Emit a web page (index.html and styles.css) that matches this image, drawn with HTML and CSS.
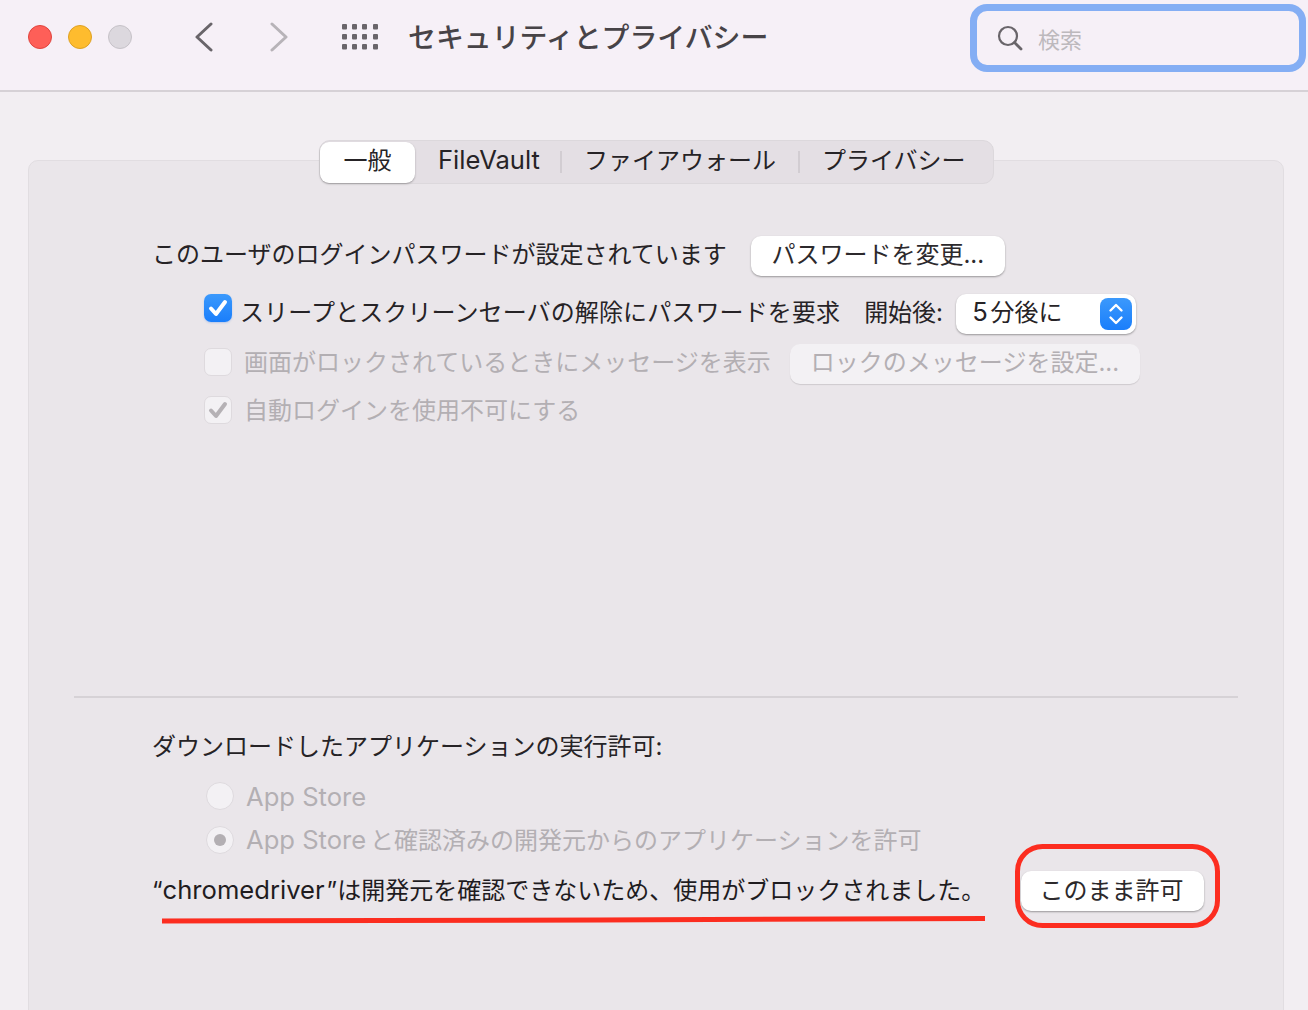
FILE: index.html
```html
<!DOCTYPE html>
<html lang="ja">
<head>
<meta charset="utf-8">
<title>セキュリティとプライバシー</title>
<link rel="stylesheet" href="styles.css">
</head>
<body>
<div class="window">
  <header class="toolbar">
    <div class="lights">
      <span class="light light-red"></span>
      <span class="light light-yellow"></span>
      <span class="light light-gray"></span>
    </div>
    <div class="nav">
      <svg class="chev" width="20" height="30" viewBox="0 0 20 30"><path d="M17 2 L3 15 L17 28" fill="none" stroke="#69656a" stroke-width="3" stroke-linecap="round" stroke-linejoin="round"/></svg>
      <svg class="chev" width="20" height="30" viewBox="0 0 20 30"><path d="M3 2 L17 15 L3 28" fill="none" stroke="#b7b3b8" stroke-width="3" stroke-linecap="round" stroke-linejoin="round"/></svg>
    </div>
    <svg class="grid-icon" width="36" height="26" viewBox="0 0 36 26" fill="#69656a">
      <rect x="0" y="0" width="5" height="5.500" rx="1"/><rect x="10" y="0" width="5" height="5.500" rx="1"/><rect x="20" y="0" width="5" height="5.500" rx="1"/><rect x="31" y="0" width="5" height="5.500" rx="1"/>
      <rect x="0" y="10" width="5" height="5.500" rx="1"/><rect x="10" y="10" width="5" height="5.500" rx="1"/><rect x="20" y="10" width="5" height="5.500" rx="1"/><rect x="31" y="10" width="5" height="5.500" rx="1"/>
      <rect x="0" y="20" width="5" height="5.500" rx="1"/><rect x="10" y="20" width="5" height="5.500" rx="1"/><rect x="20" y="20" width="5" height="5.500" rx="1"/><rect x="31" y="20" width="5" height="5.500" rx="1"/>
    </svg>
    <h1 class="title">セキュリティとプライバシー</h1>
    <div class="search">
      <svg width="26" height="26" viewBox="0 0 26 26"><circle cx="11" cy="11" r="9" fill="none" stroke="#69656a" stroke-width="2.200"/><path d="M17.500 17.500 L24 24" fill="none" stroke="#69656a" stroke-width="2.800" stroke-linecap="round"/></svg>
      <span class="search-text">検索</span>
    </div>
  </header>

  <main class="content">
    <section class="panel">
      <div class="tabs">
        <span class="tab tab-active">一般</span>
        <span class="tab tab-file"><span class="latin">FileVault</span></span>
        <span class="sep"></span>
        <span class="tab tab-fw">ファイアウォール</span>
        <span class="sep"></span>
        <span class="tab tab-priv">プライバシー</span>
      </div>

      <div class="row row-login">
        <span class="lbl lbl-up">このユーザのログインパスワードが設定されています</span>
        <span class="btn btn-up btn-change">パスワードを変更...</span>
      </div>

      <div class="row row-sleep">
        <span class="check check-on">
          <svg width="22" height="20" viewBox="0 0 22 20"><path d="M4 10.500 L9 16 L18 4" fill="none" stroke="#fff" stroke-width="4" stroke-linecap="round" stroke-linejoin="round"/></svg>
        </span>
        <span class="lbl lbl-up sleep-text">スリープとスクリーンセーバの解除にパスワードを要求</span>
        <span class="lbl lbl-up start-label">開始後:</span>
        <span class="select">
          <span class="lbl lbl-up select-text"><span class="latin">5</span> 分後に</span>
          <span class="stepper">
            <svg width="16" height="26" viewBox="0 0 16 26"><path d="M2.500 9.500 L8 4 L13.500 9.500 M2.500 16.500 L8 22 L13.500 16.500" fill="none" stroke="#fff" stroke-width="2.400" stroke-linecap="round" stroke-linejoin="round"/></svg>
          </span>
        </span>
      </div>

      <div class="row row-lock muted">
        <span class="check check-off check-lock"></span>
        <span class="lbl lbl-up lock-text">画面がロックされているときにメッセージを表示</span>
        <span class="btn btn-up btn-off">ロックのメッセージを設定...</span>
      </div>

      <div class="row row-auto muted">
        <span class="check check-off">
          <svg width="22" height="20" viewBox="0 0 22 20"><path d="M4 10.500 L9 16 L18 4" fill="none" stroke="#b5b1b5" stroke-width="4" stroke-linecap="round" stroke-linejoin="round"/></svg>
        </span>
        <span class="lbl lbl-down auto-text">自動ログインを使用不可にする</span>
      </div>

      <hr class="divider">

      <div class="row row-dl"><span class="lbl">ダウンロードしたアプリケーションの実行許可:</span></div>

      <div class="row row-radio muted">
        <span class="radio"></span>
        <span class="radio-text"><span class="latin">App Store</span></span>
      </div>
      <div class="row row-radio2 muted">
        <span class="radio"><span class="radio-dot"></span></span>
        <span class="lbl lbl-down radio-text"><span class="latin">App Store</span> と確認済みの開発元からのアプリケーションを許可</span>
      </div>

      <div class="row row-block">
        <span class="lbl">“<span class="latin">chromedriver</span>”は開発元を確認できないため、使用がブロックされました。</span>
        <span class="btn btn-allow">このまま許可</span>
      </div>
    </section>
  </main>

  <svg class="marks" width="1308" height="1010" viewBox="0 0 1308 1010">
    <path d="M162 921 L600 920 L985 918.500" fill="none" stroke="#fc2d20" stroke-width="5"/>
    <rect x="1017.500" y="846.500" width="200" height="79" rx="25" fill="none" stroke="#fc2d20" stroke-width="5"/>
  </svg>
</div>
</body>
</html>
```
FILE: styles.css
```css
* { box-sizing: border-box; }
html, body { margin: 0; padding: 0; }
body {
  width: 1308px;
  height: 1010px;
  overflow: hidden;
  background: #f2eef2;
  font-family: "Inter", "Noto Sans CJK JP", sans-serif;
  font-size: 24px;
  color: #262326;
}
.window { position: relative; width: 1308px; height: 1010px; overflow: hidden; }
.latin { font-size: 25.600px; line-height: 1; }

.toolbar {
  height: 92px;
  background: #f6f0f7;
  border-bottom: 2px solid #d6d1d6;
  display: flex;
  align-items: flex-start;
  padding-left: 28px;
}
.lights { display: flex; gap: 16px; margin-top: 25px; }
.light { width: 24px; height: 24px; border-radius: 50%; border: 1px solid; }
.light-red { background: #fe5f58; border-color: #e0443e; }
.light-yellow { background: #febc2e; border-color: #dea123; }
.light-gray { background: #dcd8de; border-color: #c6c2c8; }
.nav { display: flex; gap: 55px; margin: 22px 0 0 62px; }
.chev { display: block; }
.grid-icon { margin: 24px 0 0 53px; }
.title {
  margin: 17px 0 0 30px;
  font-size: 27.900px;
  font-weight: 500;
  line-height: 42px;
  color: #474347;
  white-space: nowrap;
  width: 562px;
}
.search {
  width: 336px;
  height: 68px;
  margin-top: 4px;
  border: 7px solid #84aef4;
  border-radius: 17px;
  display: flex;
  align-items: center;
  padding-left: 20px;
  gap: 15px;
  background: #f6f0f7;
}
.search-text { color: #bdb9bd; font-size: 22px; }

.content { padding: 68px 24px 0 28px; }
.panel {
  position: relative;
  height: 900px;
  background: #eae6ea;
  border: 1px solid #e1dde1;
  border-radius: 10px;
  padding-top: 75px;
}
.tabs {
  position: absolute;
  left: 290px;
  top: -21px;
  width: 675px;
  height: 44px;
  display: flex;
  align-items: center;
  background: #e4dfe4;
  border: 1px solid #dcd8dc;
  border-radius: 11px;
  white-space: nowrap;
}
.tab { display: block; line-height: 38px; height: 41px; }
.tab-active {
  width: 95px;
  text-align: center;
  background: #fff;
  border-radius: 9px;
  box-shadow: 0 1px 2px rgba(0,0,0,.3);
}
.tab-file { margin-left: 23px; width: 102px; }
.tab-fw { margin-left: 22px; width: 194px; }
.tab-priv { margin-left: 22px; }
.sep { width: 2px; height: 22px; background: #d2cdd2; margin-left: 20px; }

.row { display: flex; align-items: center; height: 40px; white-space: nowrap; }
.muted { color: #b3afb3; }
.lbl { margin-top: -6px; }
.lbl-up { margin-top: -8px; }
.lbl-down { margin-top: -4px; }
.btn {
  display: flex;
  align-items: center;
  justify-content: center;
  height: 40px;
  padding-bottom: 6px;
  background: #fff;
  border-radius: 10px;
  box-shadow: 0 1px 2px rgba(0,0,0,.35);
  color: #2c292c;
}
.btn-up { padding-bottom: 8px; }
.row-login { padding-left: 123px; }
.btn-change { width: 254px; margin-left: 24px; }
.row-sleep { margin-top: 18px; padding-left: 175px; }
.check {
  width: 28px;
  height: 28px;
  border-radius: 7px;
  display: flex;
  align-items: center;
  justify-content: center;
  flex: none;
}
.check-on { background: linear-gradient(#3b99fc, #1a7efb); margin-top: -12px; box-shadow: 0 1px 2px rgba(30,110,230,.25); }
.check-off { background: #f3f1f4; border: 1px solid #dedade; }
.check-lock { margin-top: -4px; }
.sleep-text { margin-left: 8px; letter-spacing: .12px; }
.start-label { margin-left: 24px; width: 79px; }
.select {
  width: 180px;
  height: 40px;
  margin-left: 13px;
  display: flex;
  align-items: center;
  justify-content: space-between;
  background: #fff;
  border-radius: 10px;
  box-shadow: 0 1px 2px rgba(0,0,0,.35);
  padding: 0 4px 0 16px;
}
.select-text { word-spacing: -4px; }
.stepper {
  width: 32px;
  height: 32px;
  border-radius: 8px;
  background: linear-gradient(#3b99fc, #1a7efb);
  display: flex;
  align-items: center;
  justify-content: center;
}
.row-lock { margin-top: 10px; padding-left: 175px; }
.lock-text { margin-left: 12px; width: 528px; }
.btn-off {
  width: 350px;
  margin-left: 18px;
  background: #f3f1f4;
  color: #b3afb3;
  box-shadow: 0 1px 1px rgba(0,0,0,.12);
}
.row-auto { margin-top: 6px; padding-left: 175px; }
.auto-text { margin-left: 12px; }
.divider {
  margin: 266px 45px 0;
  height: 2px;
  border: 0;
  background: #d6d2d6;
}
.row-dl { margin-top: 29px; padding-left: 123px; }
.row-radio { margin-top: 9px; padding-left: 177px; }
.row-radio2 { margin-top: 4px; padding-left: 177px; }
.radio {
  width: 28px;
  height: 28px;
  border-radius: 50%;
  background: #f3f1f4;
  border: 1px solid #dedade;
  display: flex;
  align-items: center;
  justify-content: center;
  flex: none;
}
.radio-dot { width: 12px; height: 12px; border-radius: 50%; background: #b3afb3; }
.radio-text { margin-left: 12px; word-spacing: -3px; }
.radio-text .latin { word-spacing: 0; }
.row-radio .radio-text { margin-top: 2px; }
.row-block { margin-top: 11px; padding-left: 123px; color: #1f1c1f; }
.row-block .latin { margin-right: 2px; }
.btn-allow { width: 183px; position: absolute; left: 992px; padding-right: 2px; }

.marks { position: absolute; left: 0; top: 0; pointer-events: none; }
```
